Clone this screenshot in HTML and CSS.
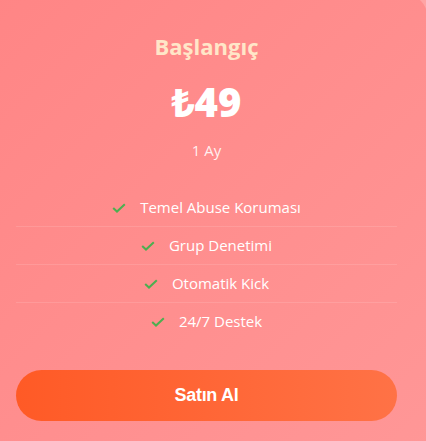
FILE: index.html
```html
<!DOCTYPE html>
<html lang="tr">
<head>
<meta charset="utf-8">
<link rel="stylesheet" href="styles.css">
</head>
<body>
<div class="card">
  <h3 class="plan-title">Başlangıç</h3>
  <div class="price">₺49</div>
  <div class="period">1 Ay</div>
  <ul class="features">
    <li><svg class="check" viewBox="0 0 14 10" width="14" height="10"><path d="M1.2 5 L5 8.6 L12.8 1.2" fill="none" stroke="#4caf50" stroke-width="2"/></svg><span>Temel Abuse Koruması</span></li>
    <li><svg class="check" viewBox="0 0 14 10" width="14" height="10"><path d="M1.2 5 L5 8.6 L12.8 1.2" fill="none" stroke="#4caf50" stroke-width="2"/></svg><span>Grup Denetimi</span></li>
    <li><svg class="check" viewBox="0 0 14 10" width="14" height="10"><path d="M1.2 5 L5 8.6 L12.8 1.2" fill="none" stroke="#4caf50" stroke-width="2"/></svg><span>Otomatik Kick</span></li>
    <li><svg class="check" viewBox="0 0 14 10" width="14" height="10"><path d="M1.2 5 L5 8.6 L12.8 1.2" fill="none" stroke="#4caf50" stroke-width="2"/></svg><span>24/7 Destek</span></li>
  </ul>
  <button class="buy">Satın Al</button>
</div>
</body>
</html>
```

FILE: styles.css
```css
html, body {
  margin: 0;
  padding: 0;
  overflow: hidden;
}
body {
  background: #ffa4a4;
  width: 426px;
  height: 441px;
  font-family: "Open Sans", "Noto Sans", sans-serif;
}
.card {
  width: 443px;
  margin-left: -15px;
  margin-top: -6px;
  box-sizing: border-box;
  padding: 39px 31px 40px;
  border-radius: 24px;
  background: linear-gradient(135deg, #ff8585 0%, #ff9797 100%);
  text-align: center;
  color: #fff;
}
.plan-title {
  margin: 0;
  font-size: 22px;
  line-height: 26px;
  font-weight: 700;
  color: #ffe6c8;
}
.price {
  margin-top: 19px;
  font-size: 40px;
  line-height: 48px;
  font-weight: 800;
  color: #fff;
}
.period {
  margin-top: 14px;
  font-size: 15px;
  line-height: 20px;
  color: rgba(255, 255, 255, 0.88);
}
.features {
  list-style: none;
  margin: 29px 0 0;
  padding: 0;
}
.features li {
  display: flex;
  align-items: center;
  justify-content: center;
  gap: 14px;
  padding: 11px 0;
  line-height: 15px;
  font-size: 15px;
  border-bottom: 1px solid rgba(255, 255, 255, 0.12);
}
.features li:last-child {
  border-bottom: none;
}
.check {
  display: block;
  flex: none;
}
.buy {
  display: block;
  width: 100%;
  height: 51px;
  margin-top: 30px;
  border: none;
  border-radius: 26px;
  background: linear-gradient(90deg, #ff5a26 0%, #ff7246 100%);
  color: #fff;
  font-family: "Liberation Sans", Arial, sans-serif;
  font-weight: 700;
  font-size: 18px;
  letter-spacing: -0.3px;
}
```
